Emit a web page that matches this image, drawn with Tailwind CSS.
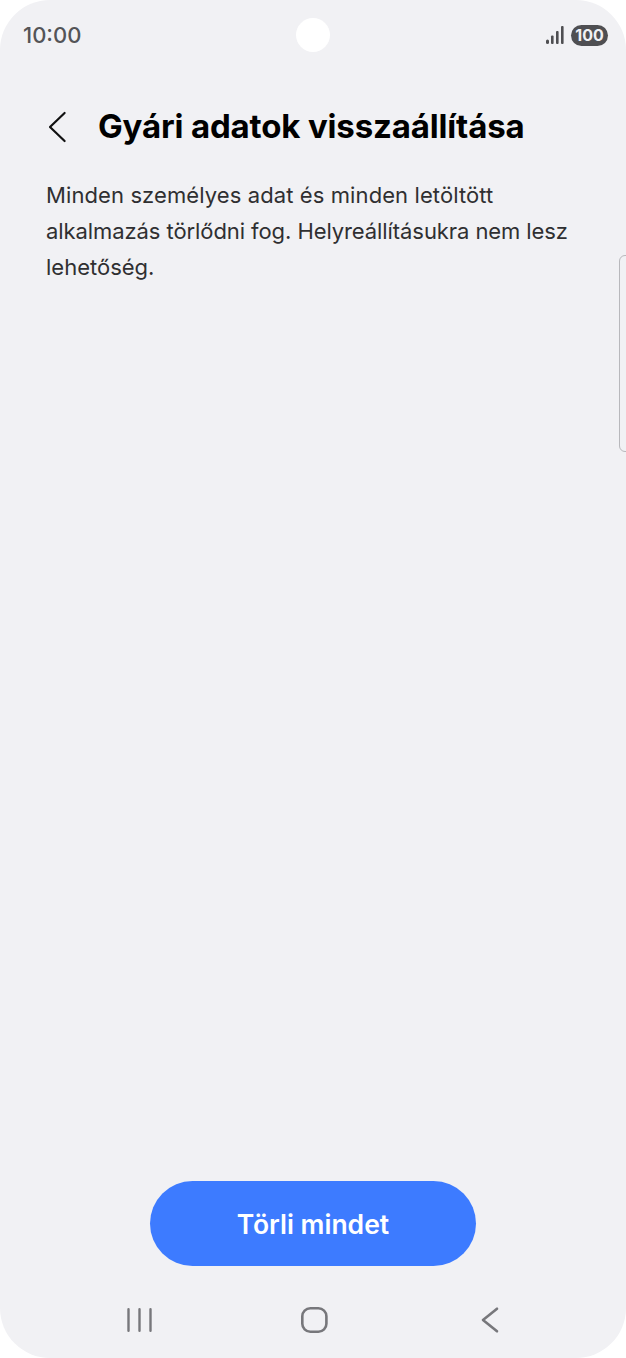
<!DOCTYPE html>
<html lang="hu">
<head>
  <meta charset="UTF-8" />
  <meta name="viewport" content="width=device-width, initial-scale=1.0" />
  <title>Gyári adatok visszaállítása</title>
  <script src="https://cdn.jsdelivr.net/npm/@tailwindcss/browser@4"></script>
</head>
<body class="bg-white font-['Inter',sans-serif]">
  <div class="relative flex flex-col w-[626px] h-[1358px] overflow-hidden rounded-[50px] bg-[#f1f1f4]">
    <!-- Kamera -->
    <div class="absolute left-[296px] top-[18px] w-[34px] h-[34px] rounded-full bg-white"></div>
    <!-- Oldalsó gomb -->
    <div class="absolute left-[619px] top-[255px] w-[10px] h-[197px] rounded-l-[6px] border border-[#b8b8bc]"></div>

    <!-- Állapotsor -->
    <header class="flex justify-between items-center h-[70px] pl-[23px] pr-[18px]">
      <span class="text-[22px] font-medium text-[#545457]">10:00</span>
      <div class="flex items-center gap-[7px]">
        <svg width="18" height="18" viewBox="0 0 18 18" fill="#4f4f52">
          <rect x="0" y="13.5" width="3" height="4.5" rx="1.5" />
          <rect x="5" y="9.5" width="2.6" height="8.5" rx="1" />
          <rect x="10" y="5" width="2.6" height="13" rx="1" />
          <rect x="15" y="0" width="2.6" height="18" rx="1" />
        </svg>
        <span class="flex justify-center items-center w-[37px] h-[21px] rounded-full bg-[#4f4f52] text-[16px] font-bold text-[#f1f1f4]">100</span>
      </div>
    </header>

    <!-- Címsor -->
    <div class="flex items-center h-[58px] mt-[28px] pl-[46px]">
      <svg width="22" height="32" viewBox="0 0 22 32" fill="none" stroke="#111" stroke-width="2.2" stroke-linecap="round" stroke-linejoin="round" class="shrink-0">
        <path d="M18.6 2 L4 16 L18.6 30" />
      </svg>
      <h1 class="ml-[30px] text-[33px] font-bold tracking-[-0.16px] text-black whitespace-nowrap">Gyári adatok visszaállítása</h1>
    </div>

    <!-- Leírás -->
    <p class="mt-[21px] pl-[46px] pr-[40px] text-[22px] leading-[36px] text-[#2f2f31]">
      <span class="tracking-[0.1px]">Minden személyes adat és minden letöltött</span><br />
      <span class="tracking-[-0.08px]">alkalmazás törlődni fog. Helyreállításukra nem lesz</span><br />
      lehetőség.
    </p>

    <!-- Gomb -->
    <div class="flex justify-center mt-auto">
      <button class="w-[326px] h-[85px] pt-[2px] rounded-full bg-[#3d7bff] text-[26.5px] font-semibold text-white">Törli mindet</button>
    </div>

    <!-- Navigáció -->
    <nav class="flex items-center gap-[149px] h-[76px] mt-[16px] pl-[126px]">
      <svg width="26" height="28" viewBox="0 0 26 28" fill="none" stroke="#77777b" stroke-width="2.4" stroke-linecap="round">
        <path d="M2.5 3.2 V24.8 M13.5 3.2 V24.8 M24.5 3.2 V24.8" />
      </svg>
      <svg width="28" height="28" viewBox="0 0 28 28" fill="none" stroke="#77777b" stroke-width="2.6">
        <rect x="1.3" y="2.3" width="24.1" height="23.4" rx="8" />
      </svg>
      <svg width="22" height="28" viewBox="0 0 22 28" fill="none" stroke="#77777b" stroke-width="2.6" stroke-linecap="round" stroke-linejoin="round">
        <path d="M19 2.7 L5 14 L19 25.3" />
      </svg>
    </nav>
  </div>
</body>
</html>
